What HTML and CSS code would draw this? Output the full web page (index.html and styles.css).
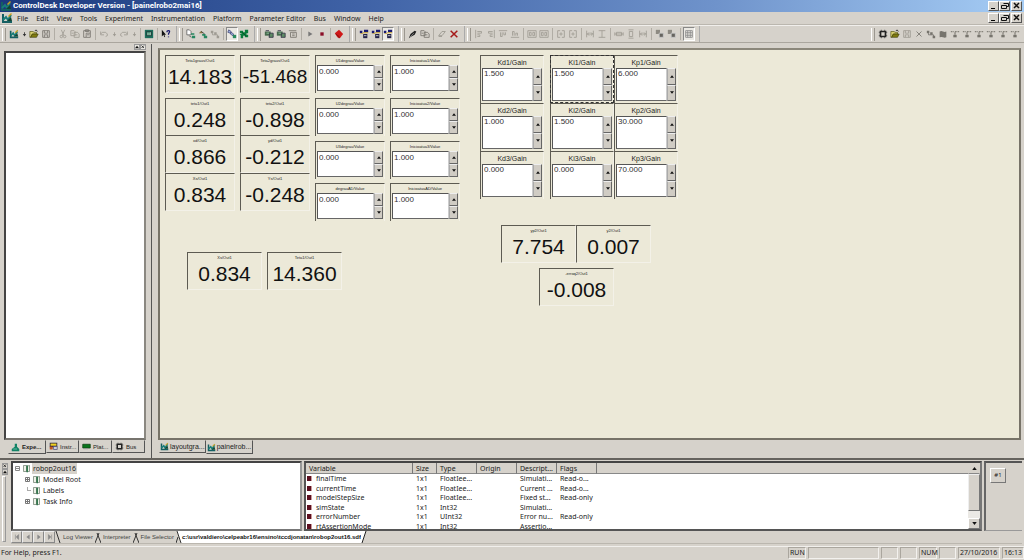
FILE: index.html
```html
<!DOCTYPE html>
<html lang="en">
<head>
<meta charset="utf-8">
<title>ControlDesk Developer Version - [painelrobo2mai16]</title>
<link rel="stylesheet" href="styles.css">
</head>
<body>
<svg class="defs" aria-hidden="true">
  <symbol id="desk" viewBox="0 0 12 12"><path d="M1 2h2v7h8v2H1z" fill="#155f62"/><path d="M2 8l3-3 2 3 3-5" fill="none" stroke="#197d78" stroke-width="2"/><path d="M7 4l3-3 1 1-3 3z" fill="#c8a020"/><path d="M6 9l4-4 1 4z" fill="#143"/></symbol>
  <symbol id="down" viewBox="0 0 6 12"><path d="M1 6h4L3 9zM2.500 4h1v2h-1z" fill="currentColor"/></symbol>
  <symbol id="open" viewBox="0 0 12 12"><path d="M1 3h4l1 1h3v2H4l-2 4H1z" fill="#d8d070" stroke="#444400" stroke-width=".7"/><path d="M4 6h7l-2 4H2z" fill="#807c10" stroke="#333300" stroke-width=".7"/><path d="M7 2q2-2 3 1" fill="none" stroke="#222"/></symbol>
  <symbol id="save" viewBox="0 0 12 12"><path d="M2 2h8v8H2zM4 2v3h4V2M4 10V7h4v3" fill="none" stroke="currentColor"/></symbol>
  <symbol id="cut" viewBox="0 0 12 12"><path d="M4 1l3 7M8 1L5 8" stroke="currentColor" fill="none"/><circle cx="4" cy="9" r="1.500" fill="none" stroke="currentColor"/><circle cx="8" cy="9" r="1.500" fill="none" stroke="currentColor"/></symbol>
  <symbol id="copy" viewBox="0 0 12 12"><path d="M1 2h4l1 1v5H1zM5 4h4l2 2v4H5zM6 7h3M2 5h2" fill="none" stroke="currentColor"/></symbol>
  <symbol id="paste" viewBox="0 0 12 12"><path d="M2 2h8v3M2 2v8h3M4 1h4v2H4zM5 5h5v5H5zM6 7h3" fill="none" stroke="currentColor"/></symbol>
  <symbol id="undo" viewBox="0 0 12 12"><path d="M2 3v4h4M2 6l2-2h4l2 2v2l-2 1" fill="none" stroke="currentColor"/></symbol>
  <symbol id="redo" viewBox="0 0 12 12"><path d="M10 3v4H6M10 6L8 4H4L2 6v2l2 1" fill="none" stroke="currentColor"/></symbol>
  <symbol id="monitor" viewBox="0 0 12 12"><path d="M1 1h10v10H1z" fill="#1c6d5b"/><path d="M3 3h6v5H3z" fill="#bcd6bc" stroke="#133"/><path d="M3 4h5M3 6h5" stroke="#176a57"/></symbol>
  <symbol id="help" viewBox="0 0 12 12"><path d="M1 1v8l2-2 1 3 1-1-1-2h2z" fill="#111"/><path d="M7 4q0-2 2-2t1 2L9 6v1M9 9v1" fill="none" stroke="#15156a" stroke-width="1.500"/></symbol>
  <symbol id="pages" viewBox="0 0 12 12"><path d="M1 1h3l2 2v4H1z" fill="#fff" stroke="#444" stroke-width=".8"/><path d="M6 5h4v2H6zM7 8h4v3H7z" fill="#278660"/><path d="M4 8l2 2" stroke="#333"/></symbol>
  <symbol id="plug" viewBox="0 0 12 12"><path d="M1 5l3-3 2 3H3z" fill="#8a7440"/><path d="M4 3l4 3" stroke="#333"/><path d="M5 6h4v2H5zM7 8h4v3H7z" fill="#278660"/></symbol>
  <symbol id="nodes" viewBox="0 0 12 12"><path d="M1 2h3v3H1zM5 4h3v3H5zM8 8h3v3H8z" fill="currentColor"/><path d="M3 5v2h6v2" stroke="currentColor" fill="none"/></symbol>
  <symbol id="chain" viewBox="0 0 12 12"><path d="M2 1l3 2-1 2-3-1zM5 4l3 2-1 2-3-2z" fill="#9ab0dd" stroke="#336" stroke-width=".8"/><path d="M7 7h4v4H7z" fill="#2a8a60"/></symbol>
  <symbol id="clover" viewBox="0 0 12 12"><path d="M1 2h4v2h2V1h4v4H9v2h2v3H7V8H5v3H2V7H1V6h2V5H1z" fill="#087b3c"/><path d="M4 4l5 5" stroke="#044d22"/></symbol>
  <symbol id="rack" viewBox="0 0 12 12"><path d="M1 3h7v5H1z" fill="#476b4f"/><path d="M2 2h4M7 5h4v5H6z" fill="#5d8b65" stroke="#334"/><path d="M3 5h3" stroke="#9ca"/></symbol>
  <symbol id="list" viewBox="0 0 12 12"><path d="M1 2h9M3 4h7v6H3zM5 6h3M5 8h3" fill="none" stroke="#77746c"/></symbol>
  <symbol id="play" viewBox="0 0 12 12"><path d="M4 3l5 3-5 3z" fill="#777"/></symbol>
  <symbol id="stop" viewBox="0 0 12 12"><path d="M4 4h4v4H4z" fill="#8b0d27"/></symbol>
  <symbol id="gem" viewBox="0 0 12 12"><path d="M1 5l5-4 5 5-4 5-3-1z" fill="#cf1818"/><path d="M2 6l4 3v2" stroke="#7c0b0b" fill="none"/></symbol>
  <symbol id="inst" viewBox="0 0 12 12"><path d="M1 2h3v3H1zM6 1h5v3H6z" fill="#181a70"/><path d="M2 5h3v1H2zM5 4h6v1H5z" fill="#c9a430"/><path d="M5 6h5v5H5z" fill="#242449"/><path d="M6 8h3" stroke="#ddd"/></symbol>
  <symbol id="pen" viewBox="0 0 12 12"><path d="M1 11l2-5 5-4 2 1-2 4-4 2z" fill="#222"/><path d="M2 10l5-5" stroke="#888"/></symbol>
  <symbol id="erase" viewBox="0 0 12 12"><path d="M2 8l4-5h4L6 8zM2 9h4" fill="none" stroke="#9a978f"/></symbol>
  <symbol id="cross" viewBox="0 0 12 12"><path d="M2 2l8 8M10 2l-8 8" stroke="#a51a1a" stroke-width="1.800"/></symbol>
  <symbol id="xgray" viewBox="0 0 12 12"><path d="M3 3l6 6M9 3L3 9" stroke="currentColor"/></symbol>
  <symbol id="al" viewBox="0 0 12 12"><path d="M2 1v10M4 3h5v2H4M4 7h3v2H4" fill="none" stroke="currentColor"/></symbol>
  <symbol id="ar" viewBox="0 0 12 12"><path d="M10 1v10M8 3H3v2h5M8 7H5v2h3" fill="none" stroke="currentColor"/></symbol>
  <symbol id="at" viewBox="0 0 12 12"><path d="M1 2h10M3 4v5h2V4M7 4v3h2V4" fill="none" stroke="currentColor"/></symbol>
  <symbol id="ab" viewBox="0 0 12 12"><path d="M1 10h10M3 8V3h2v5M7 8V5h2v3" fill="none" stroke="currentColor"/></symbol>
  <symbol id="box" viewBox="0 0 12 12"><path d="M1 2h10v8H1zM3 4h2v4H3zM7 4h2v4H7z" fill="none" stroke="currentColor"/></symbol>
  <symbol id="split" viewBox="0 0 12 12"><path d="M5 2H2v8h3M7 2h3v8H7M4 6h4M6 4v4" fill="none" stroke="currentColor"/></symbol>
  <symbol id="hsp" viewBox="0 0 12 12"><path d="M2 2v8M10 2v8M2 6h8M5 4L3 6l2 2M7 4l2 2-2 2" fill="none" stroke="currentColor"/></symbol>
  <symbol id="vsp" viewBox="0 0 12 12"><path d="M2 2h8M2 10h8M6 2v8" fill="none" stroke="currentColor"/></symbol>
  <symbol id="wide" viewBox="0 0 12 12"><path d="M1 4v4M11 4v4M3 4h6v4H3zM1 6h10" fill="none" stroke="currentColor"/></symbol>
  <symbol id="tall" viewBox="0 0 12 12"><path d="M3 1h6M3 11h6M4 3h4v6H4z" fill="none" stroke="currentColor"/></symbol>
  <symbol id="layer" viewBox="0 0 12 12"><path d="M1 1h5v5H1z" fill="#8d8a82"/><path d="M5 5h5v5H5z" fill="#66645f" stroke="#ccc"/></symbol>
  <symbol id="grid" viewBox="0 0 12 12"><path d="M2 2h8v8H2zM2 4.500h8M2 7.500h8M4.500 2v8M7.500 2v8" fill="none" stroke="#888"/></symbol>
  <symbol id="bus" viewBox="0 0 12 12"><path d="M3 3h6v6H3z" fill="none" stroke="#222" stroke-width="2"/><path d="M1 4h1M1 8h1M10 4h1M10 8h1M4 1v1M8 1v1M4 10v1M8 10v1" stroke="#222"/></symbol>
  <symbol id="flag" viewBox="0 0 12 12"><path d="M2 3q2-1 4 0t4 0v7q-2 1-4 0t-4 0z" fill="#77746d"/></symbol>
  <symbol id="com" viewBox="0 0 12 12"><path d="M1 3h2M4 3h1M6 3h2M9 3h2M6 4v3" stroke="#85827a" stroke-width="1.500"/><path d="M4 7h4v3H4z" fill="#77746d"/></symbol>
  <symbol id="flask" viewBox="0 0 12 12"><path d="M5 1h3v4l3 3v3H1V8l4-3z" fill="#128266"/><path d="M3 8h5" stroke="#7fd0b8"/></symbol>
  <symbol id="chip" viewBox="0 0 12 12"><path d="M1 3h10v5H1z" fill="#08751b" stroke="#0b3d11"/><path d="M2 9h6" stroke="#999"/></symbol>
  <symbol id="gauge" viewBox="0 0 12 12"><path d="M1 1h10v6H1z" fill="#201c42"/><path d="M1 6h4v4H1z" fill="#b52"/><path d="M2 2h8v3H2z" fill="#f0d020"/><path d="M6 6h5v4H6z" fill="#ccd" stroke="#557"/></symbol>
  <symbol id="book" viewBox="0 0 12 12"><path d="M2 2h4v8H2zM6 3l4-1v8H6z" fill="#eef2e8" stroke="#536353" stroke-width=".8"/><path d="M6 2h2v9H6z" fill="#337a50"/></symbol>
  <symbol id="up3" viewBox="0 0 6 4"><path d="M3 0l3 4H0z" fill="#111"/></symbol>
  <symbol id="dn3" viewBox="0 0 6 4"><path d="M3 4l3-4H0z" fill="#111"/></symbol>
  <symbol id="wmin" viewBox="0 0 8 8"><path d="M1 6h4v1H1z"/></symbol>
  <symbol id="wres" viewBox="0 0 8 8"><path d="M2.500 1.500h5v3h-2M.500 3.500h5v3h-5z" fill="none" stroke="#111"/></symbol>
  <symbol id="wx" viewBox="0 0 8 8"><path d="M1 1l5 5M6 1L1 6" stroke="#111" stroke-width="1.500"/></symbol>
</svg>
<div class="app">
  <header class="titlebar">
    <svg class="ico"><use href="#desk"/></svg>
    <h1>ControlDesk Developer Version - [painelrobo2mai16]</h1>
    <div class="winbtns"><button aria-label="Minimize"><svg><use href="#wmin"/></svg></button><button aria-label="Restore"><svg><use href="#wres"/></svg></button><button class="close" aria-label="Close"><svg><use href="#wx"/></svg></button></div>
  </header>
  <nav class="menubar">
    <svg class="ico"><use href="#desk"/></svg>
    <button>File</button><button>Edit</button><button>View</button><button>Tools</button><button>Experiment</button><button>Instrumentation</button><button>Platform</button><button>Parameter Editor</button><button>Bus</button><button>Window</button><button>Help</button>
    <div class="winbtns"><button aria-label="Minimize document"><svg><use href="#wmin"/></svg></button><button aria-label="Restore document"><svg><use href="#wres"/></svg></button><button class="close" aria-label="Close document"><svg><use href="#wx"/></svg></button></div>
  </nav>
  <div class="toolbar">
    <div class="group"><button aria-label="Layout"><svg><use href="#desk"/></svg></button><button class="dd" aria-label="New"><svg><use href="#down"/></svg></button><button aria-label="Open"><svg><use href="#open"/></svg></button><button class="mid" aria-label="Save"><svg><use href="#save"/></svg></button><i></i><button class="off" aria-label="Cut"><svg><use href="#cut"/></svg></button><button class="off" aria-label="Copy"><svg><use href="#copy"/></svg></button><button class="mid" aria-label="Paste"><svg><use href="#paste"/></svg></button><i></i><button class="off" aria-label="Undo"><svg><use href="#undo"/></svg></button><button class="dd off" aria-label="Undo list"><svg><use href="#down"/></svg></button><button class="off" aria-label="Redo"><svg><use href="#redo"/></svg></button><button class="dd off" aria-label="Redo list"><svg><use href="#down"/></svg></button><i></i><button aria-label="Monitor"><svg><use href="#monitor"/></svg></button><i></i><button aria-label="Context help"><svg><use href="#help"/></svg></button></div>
    <div class="group"><button aria-label="New experiment"><svg><use href="#pages"/></svg></button><button aria-label="Connect"><svg><use href="#plug"/></svg></button><button class="off" aria-label="Tree"><svg><use href="#nodes"/></svg></button><i></i><button class="on" aria-label="Edit mode"><svg><use href="#chain"/></svg></button><button aria-label="Animation mode"><svg><use href="#clover"/></svg></button></div>
    <div class="group"><button aria-label="Platform"><svg><use href="#rack"/></svg></button><button aria-label="Load"><svg><use href="#rack"/></svg></button><button aria-label="Properties"><svg><use href="#list"/></svg></button><i></i><button aria-label="Start"><svg><use href="#play"/></svg></button><button aria-label="Stop"><svg><use href="#stop"/></svg></button><i></i><button aria-label="Stop all"><svg><use href="#gem"/></svg></button></div>
    <div class="group"><button aria-label="Instruments"><svg><use href="#inst"/></svg></button><button aria-label="Data acquisition"><svg><use href="#inst"/></svg></button><button class="on" aria-label="Capture"><svg><use href="#inst"/></svg></button></div>
    <div class="group"><button aria-label="Draw"><svg><use href="#pen"/></svg></button><button class="mid" aria-label="Duplicate"><svg><use href="#copy"/></svg></button><i></i><button aria-label="Erase"><svg><use href="#erase"/></svg></button><button aria-label="Delete"><svg><use href="#cross"/></svg></button></div>
    <div class="group off"><button aria-label="Align left"><svg><use href="#al"/></svg></button><button aria-label="Align right"><svg><use href="#ar"/></svg></button><button aria-label="Align top"><svg><use href="#at"/></svg></button><button aria-label="Align bottom"><svg><use href="#ab"/></svg></button><i></i><button aria-label="Group"><svg><use href="#box"/></svg></button><button aria-label="Ungroup"><svg><use href="#box"/></svg></button><i></i><button aria-label="Center horizontally"><svg><use href="#split"/></svg></button><button aria-label="Center vertically"><svg><use href="#split"/></svg></button><i></i><button aria-label="Space across"><svg><use href="#hsp"/></svg></button><button aria-label="Space down"><svg><use href="#vsp"/></svg></button><i></i><button aria-label="Same width"><svg><use href="#wide"/></svg></button><button aria-label="Same height"><svg><use href="#tall"/></svg></button><button aria-label="Same size"><svg><use href="#hsp"/></svg></button><i></i><button aria-label="To front"><svg><use href="#layer"/></svg></button><button aria-label="To back"><svg><use href="#layer"/></svg></button><i></i><button class="on" aria-label="Grid"><svg><use href="#grid"/></svg></button></div>
    <div class="group right"><button aria-label="Bus"><svg><use href="#bus"/></svg></button><button aria-label="Open bus"><svg><use href="#open"/></svg></button><button class="off" aria-label="Save bus"><svg><use href="#save"/></svg></button><button class="mid" aria-label="Remove"><svg><use href="#xgray"/></svg></button><button class="mid" aria-label="Network"><svg><use href="#nodes"/></svg></button><button aria-label="Flag"><svg><use href="#flag"/></svg></button><button aria-label="COM 1"><svg><use href="#com"/></svg></button><button aria-label="COM 2"><svg><use href="#com"/></svg></button><button aria-label="COM 3"><svg><use href="#com"/></svg></button><button aria-label="COM 4"><svg><use href="#com"/></svg></button><button aria-label="COM 5"><svg><use href="#com"/></svg></button><button aria-label="COM 6"><svg><use href="#com"/></svg></button></div>
  </div>

  <main class="main">
    <aside class="side">
      <div class="sidehead"><button aria-label="Expand"><svg><use href="#up3"/></svg></button><button aria-label="Close panel"><svg><use href="#wx"/></svg></button></div>
      <div class="navigator"></div>
      <div class="tabs"><button class="active"><svg><use href="#flask"/></svg>Expe...</button><button><svg><use href="#gauge"/></svg>Instr...</button><button><svg><use href="#chip"/></svg>Plat...</button><button><svg><use href="#bus"/></svg>Bus</button></div>
    </aside>
    <section class="work">
      <div class="canvas">
        <div class="disp c1 r1"><span>Teta1graus/Out1</span><output>14.183</output></div>
        <div class="disp c2 r1 long"><span>Teta2graus/Out1</span><output>-51.468</output></div>
        <div class="disp c1 r2"><span>teta1/Out1</span><output>0.248</output></div>
        <div class="disp c2 r2"><span>teta2/Out1</span><output>-0.898</output></div>
        <div class="disp c1 r3"><span>xd/Out1</span><output>0.866</output></div>
        <div class="disp c2 r3"><span>yd/Out1</span><output>-0.212</output></div>
        <div class="disp c1 r4"><span>Xs/Out1</span><output>0.834</output></div>
        <div class="disp c2 r4"><span>Ys/Out1</span><output>-0.248</output></div>
        <div class="disp big p1"><span>Xs/Out1</span><output>0.834</output></div>
        <div class="disp big p2"><span>Teta1/Out1</span><output>14.360</output></div>
        <div class="disp big p3"><span>yp2/Out1</span><output>7.754</output></div>
        <div class="disp big p4"><span>y2/Out1</span><output>0.007</output></div>
        <div class="disp big p5"><span>-erroq2/Out1</span><output>-0.008</output></div>

        <div class="num c3 r1"><label for="u1">U1degrau/Value</label><input id="u1" value="0.000"><div class="spin"><button aria-label="Up"><svg><use href="#up3"/></svg></button><button aria-label="Down"><svg><use href="#dn3"/></svg></button></div></div>
        <div class="num c4 r1"><label for="i1">Inicioatua1/Value</label><input id="i1" value="1.000"><div class="spin"><button aria-label="Up"><svg><use href="#up3"/></svg></button><button aria-label="Down"><svg><use href="#dn3"/></svg></button></div></div>
        <div class="num c3 r2"><label for="u2">U2degrau/Value</label><input id="u2" value="0.000"><div class="spin"><button aria-label="Up"><svg><use href="#up3"/></svg></button><button aria-label="Down"><svg><use href="#dn3"/></svg></button></div></div>
        <div class="num c4 r2"><label for="i2">Inicioatua2/Value</label><input id="i2" value="1.000"><div class="spin"><button aria-label="Up"><svg><use href="#up3"/></svg></button><button aria-label="Down"><svg><use href="#dn3"/></svg></button></div></div>
        <div class="num c3 n3"><label for="u3">U3degrau/Value</label><input id="u3" value="0.000"><div class="spin"><button aria-label="Up"><svg><use href="#up3"/></svg></button><button aria-label="Down"><svg><use href="#dn3"/></svg></button></div></div>
        <div class="num c4 n3"><label for="i3">Inicioatua3/Value</label><input id="i3" value="1.000"><div class="spin"><button aria-label="Up"><svg><use href="#up3"/></svg></button><button aria-label="Down"><svg><use href="#dn3"/></svg></button></div></div>
        <div class="num c3 n4"><label for="u4">degrauAD/Value</label><input id="u4" value="0.000"><div class="spin"><button aria-label="Up"><svg><use href="#up3"/></svg></button><button aria-label="Down"><svg><use href="#dn3"/></svg></button></div></div>
        <div class="num c4 n4"><label for="i4">InicioatuaAD/Value</label><input id="i4" value="1.000"><div class="spin"><button aria-label="Up"><svg><use href="#up3"/></svg></button><button aria-label="Down"><svg><use href="#dn3"/></svg></button></div></div>

        <div class="num gain g1 h1"><label for="kd1">Kd1/Gain</label><input id="kd1" value="1.500"><div class="spin"><button aria-label="Up"><svg><use href="#up3"/></svg></button><button aria-label="Down"><svg><use href="#dn3"/></svg></button></div></div>
        <div class="num gain g2 h1 selected"><label for="ki1">Ki1/Gain</label><input id="ki1" value="1.500"><div class="spin"><button aria-label="Up"><svg><use href="#up3"/></svg></button><button aria-label="Down"><svg><use href="#dn3"/></svg></button></div></div>
        <div class="num gain g3 h1"><label for="kp1">Kp1/Gain</label><input id="kp1" value="6.000"><div class="spin"><button aria-label="Up"><svg><use href="#up3"/></svg></button><button aria-label="Down"><svg><use href="#dn3"/></svg></button></div></div>
        <div class="num gain g1 h2"><label for="kd2">Kd2/Gain</label><input id="kd2" value="1.000"><div class="spin"><button aria-label="Up"><svg><use href="#up3"/></svg></button><button aria-label="Down"><svg><use href="#dn3"/></svg></button></div></div>
        <div class="num gain g2 h2"><label for="ki2">Ki2/Gain</label><input id="ki2" value="1.500"><div class="spin"><button aria-label="Up"><svg><use href="#up3"/></svg></button><button aria-label="Down"><svg><use href="#dn3"/></svg></button></div></div>
        <div class="num gain g3 h2"><label for="kp2">Kp2/Gain</label><input id="kp2" value="30.000"><div class="spin"><button aria-label="Up"><svg><use href="#up3"/></svg></button><button aria-label="Down"><svg><use href="#dn3"/></svg></button></div></div>
        <div class="num gain g1 h3"><label for="kd3">Kd3/Gain</label><input id="kd3" value="0.000"><div class="spin"><button aria-label="Up"><svg><use href="#up3"/></svg></button><button aria-label="Down"><svg><use href="#dn3"/></svg></button></div></div>
        <div class="num gain g2 h3"><label for="ki3">Ki3/Gain</label><input id="ki3" value="0.000"><div class="spin"><button aria-label="Up"><svg><use href="#up3"/></svg></button><button aria-label="Down"><svg><use href="#dn3"/></svg></button></div></div>
        <div class="num gain g3 h3"><label for="kp3">Kp3/Gain</label><input id="kp3" value="70.000"><div class="spin"><button aria-label="Up"><svg><use href="#up3"/></svg></button><button aria-label="Down"><svg><use href="#dn3"/></svg></button></div></div>
      </div>
      <div class="tabs sheets"><button><svg><use href="#desk"/></svg>layoutgra...</button><button class="active"><svg><use href="#desk"/></svg>painelrob...</button></div>
    </section>
  </main>

  <section class="tools">
    <div class="handle"><button aria-label="Close tool window"><svg><use href="#wx"/></svg></button><button aria-label="Collapse tool window"><svg><use href="#up3"/></svg></button><div class="rail"></div></div>
    <div class="toolbody">
      <div class="panes">
        <ul class="tree">
          <li><svg class="pm" viewBox="0 0 7 7"><path d="M1.500 1.500h4v4h-4zM2 3.500h3" fill="none" stroke="#888"/></svg><svg class="ico"><use href="#book"/></svg><span class="sel">robop2out16</span>
            <ul>
              <li><svg class="pm" viewBox="0 0 7 7"><path d="M1.500 1.500h4v4h-4zM2 3.500h3M3.500 2v3" fill="none" stroke="#777"/></svg><svg class="ico"><use href="#book"/></svg><span>Model Root</span></li>
              <li><svg class="pm" viewBox="0 0 7 7"><path d="M3.500 0v4M4 3.500h3" fill="none" stroke="#aaa"/></svg><svg class="ico"><use href="#book"/></svg><span>Labels</span></li>
              <li><svg class="pm" viewBox="0 0 7 7"><path d="M1.500 1.500h4v4h-4zM2 3.500h3M3.500 2v3" fill="none" stroke="#777"/></svg><svg class="ico"><use href="#book"/></svg><span>Task Info</span></li>
            </ul>
          </li>
        </ul>
        <div class="vars">
          <div class="tablebox">
            <table>
              <colgroup><col class="w1"><col class="w2"><col class="w3"><col class="w3"><col class="w3"><col class="w3"><col></colgroup>
              <thead><tr><th>Variable</th><th>Size</th><th>Type</th><th>Origin</th><th>Descript...</th><th>Flags</th><th></th></tr></thead>
              <tbody>
                <tr><td><b></b>finalTime</td><td>1x1</td><td>FloatIee...</td><td></td><td>Simulati...</td><td>Read-o...</td><td></td></tr>
                <tr><td><b></b>currentTime</td><td>1x1</td><td>FloatIee...</td><td></td><td>Current ...</td><td>Read-o...</td><td></td></tr>
                <tr><td><b></b>modelStepSize</td><td>1x1</td><td>FloatIee...</td><td></td><td>Fixed st...</td><td>Read-only</td><td></td></tr>
                <tr><td><b></b>simState</td><td>1x1</td><td>Int32</td><td></td><td>Simulati...</td><td></td><td></td></tr>
                <tr><td><b></b>errorNumber</td><td>1x1</td><td>UInt32</td><td></td><td>Error nu...</td><td>Read-only</td><td></td></tr>
                <tr><td><b></b>rtAssertionMode</td><td>1x1</td><td>Int32</td><td></td><td>Assertio...</td><td></td><td></td></tr>
              </tbody>
            </table>
          </div>
          <div class="scroll"><button class="flat" aria-label="Scroll up"><svg><use href="#up3"/></svg></button><div class="thumb"></div><div class="track"></div><button aria-label="Scroll down"><svg><use href="#dn3"/></svg></button></div>
        </div>
        <div class="extra"><button>#1</button></div>
      </div>
      <div class="filetabs">
        <button class="nav" aria-label="First"><svg viewBox="0 0 10 10"><path d="M3 2v6M7 2L4 5l3 3z" fill="#888" stroke="#888" stroke-width=".8"/></svg></button><button class="nav" aria-label="Previous"><svg viewBox="0 0 10 10"><path d="M7 2L3 5l4 3z" fill="#888"/></svg></button><button class="nav" aria-label="Next"><svg viewBox="0 0 10 10"><path d="M3 2l4 3-4 3z" fill="#888"/></svg></button><button class="nav" aria-label="Last"><svg viewBox="0 0 10 10"><path d="M7 2v6M3 2l3 3-3 3z" fill="#888" stroke="#888" stroke-width=".8"/></svg></button>
        <svg class="slash" viewBox="0 0 6 12"><path d="M1 0l4 12" stroke="#333"/></svg><button>Log Viewer</button>
        <svg class="slash" viewBox="0 0 6 12"><path d="M0 12L4 2M2 2l4 10" stroke="#333"/></svg><button>Interpreter</button>
        <svg class="slash" viewBox="0 0 6 12"><path d="M0 12L4 2M2 2l4 10" stroke="#333"/></svg><button>File Selector</button>
        <svg class="slash" viewBox="0 0 6 12"><path d="M1 0h5v12H5z" fill="#fff"/><path d="M0 12l2-6M1 0l4 12" stroke="#333"/></svg><button class="active">c:\usr\valdiero\celpeabr16\ensino\tccdjonatan\robop2out16.sdf</button><svg class="slash" viewBox="0 0 6 12"><path d="M0 0h5L1 12H0z" fill="#fff"/><path d="M5 0L1 12" stroke="#222"/></svg>
      </div>
    </div>
  </section>
  <footer class="status"><span class="msg">For Help, press F1.</span><span class="cell s1">RUN</span><span class="cell s2"></span><span class="cell s3"></span><span class="cell s3"></span><span class="cell s4">NUM</span><span class="cell s3"></span><span class="cell s5">27/10/2016</span><span class="cell s6">16:13</span></footer>
</div>
</body>
</html>
```

FILE: styles.css
```css
* { box-sizing: border-box; }
html, body { margin: 0; height: 100%; }
body { font: 7px/9px "Noto Sans", "DejaVu Sans", sans-serif; color: #222; background: #d6d2cb; overflow: hidden; }
button { font: inherit; color: inherit; margin: 0; padding: 0; border: 0; background: none; display: flex; align-items: center; justify-content: center; }
svg { display: block; flex: none; }
.defs { width: 0; height: 0; position: absolute; }
.app { height: 100vh; display: flex; flex-direction: column; }
.ico { width: 12px; height: 12px; }

.titlebar { display: flex; align-items: center; gap: 1px; height: 12px; background: linear-gradient(90deg, #1c3a7e, #3f62a6 35%, #6f93cb 70%, #a6cdf5); color: #fff; }
.titlebar h1 { margin: 0; font: 700 8px/12px Roboto, "Noto Sans", sans-serif; white-space: nowrap; }
.winbtns { margin-left: auto; display: flex; padding-right: 2px; }
.winbtns button { width: 11px; height: 10px; background: #d6d2cb; border: 1px solid; border-color: #fff #555 #555 #fff; color: #111; }
.winbtns .close { margin-left: 1px; }
.winbtns svg { width: 8px; height: 8px; }
.menubar { display: flex; align-items: center; height: 13px; padding-left: 1px; border-bottom: 1px solid #bbb7af; }
.menubar > button { padding: 0 4px; }

.toolbar { display: flex; height: 18px; align-items: stretch; border-bottom: 1px solid #aaa69e; border-top: 1px solid #f1efec; }
.group { display: flex; align-items: center; padding: 0 4px 0 2px; border-right: 1px solid #aaa; }
.group::before { content: ""; width: 2px; height: 13px; margin-right: 2px; border-left: 1px solid #fff; border-right: 1px solid #9b978f; }
.group button { width: 12px; height: 14px; color: #333; }
.group svg { width: 10px; height: 10px; }
.group .dd { width: 8px; }
.group .dd svg { width: 5px; }
.group .on { background: #ebe9e4; border: 1px solid; border-color: #888 #fff #fff #888; }
.group .off, .off button { color: #9f9b93; }
.group .mid { color: #77746d; }
.group i { width: 1px; height: 12px; margin: 0 2px; background: #b1ada5; }
.group.right { margin-left: auto; border-right: 0; padding-right: 3px; }

.main { flex: 1; min-height: 0; display: flex; }
.side { width: 152px; flex: none; display: flex; flex-direction: column; border-right: 1px solid #555; margin-top: 1px; padding: 0 5px 0 4px; }
.sidehead { display: flex; justify-content: flex-end; height: 7px; }
.sidehead button { width: 6px; height: 6px; border: 1px solid #999; background: #e8e6e0; }
.sidehead svg { width: 4px; height: 4px; }
.navigator { flex: 1; background: #fff; border: 2px solid; border-color: #444 #8b8881 #77746e #444; }
.tabs { display: flex; height: 18px; align-items: flex-start; padding-left: 4px; font: 6px/10px "Liberation Sans", Arial, sans-serif; }
.tabs button { height: 13px; padding: 0 2px; gap: 2px; border: 1px solid; border-color: transparent #555 #555 transparent; width: 33px; justify-content: flex-start; }
.tabs svg { width: 9px; height: 9px; }
.tabs .active { font-weight: 700; width: 38px; height: 14px; }
.sheets { font-size: 7px; padding-left: 1px; }
.sheets button, .sheets .active { width: auto; font-weight: 400; gap: 1px; padding: 0; }
.sheets .active { padding-right: 1px; }
.work { flex: 1; min-width: 0; display: flex; flex-direction: column; padding: 5px 3px 0 6px; }
.canvas { flex: 1; position: relative; background: #ece9d8; border: 2px solid; border-color: #8b877a #777368 #777368 #777368; }

.disp, .num { position: absolute; width: 70px; height: 38px; border-top: 1px solid #5d5b52; border-left: 1px solid #5d5b52; border-right: 1px solid #f3f1e8; font-family: "Liberation Sans", Arial, sans-serif; }
.disp { display: flex; flex-direction: column; align-items: center; border-bottom: 1px solid #f3f1e8; }
.disp span, .num label { font-size: 4px; line-height: 5px; padding-top: 2px; text-align: center; white-space: nowrap; }
.disp output { font-size: 21px; line-height: 28px; color: #111; white-space: nowrap; }
.disp.long output { font-size: 19px; }
.disp.big { width: 75px; }
.num { display: grid; grid-template: 9px 1fr / 1fr 9px; padding: 0 1px 2px 1px; }
.num label { grid-column: 1 / 3; }
.num input { min-width: 0; width: 100%; height: 100%; border: 1px solid; border-color: #555 #ccc #666 #555; background: #fff; font: 8px/9px "Liberation Sans", Arial, sans-serif; color: #333; padding: 0 0 14px 1px; outline: 0; }
.spin { display: grid; grid-template-rows: 1fr 1fr; }
.spin button { border: 1px solid; border-color: #eee #666 #666 #aaa; background: #d0ccc4; }
.spin svg { width: 4px; height: 3px; }
.gain { width: 64px; height: 48px; grid-template-rows: 12px 1fr; }
.gain label { font-size: 7px; line-height: 9px; }
.gain input { padding-bottom: 22px; }
.selected { outline: 1px dashed #333; outline-offset: -1px; }
.c1 { left: 5px; } .c2 { left: 80px; } .c3 { left: 155px; } .c4 { left: 230px; }
.r1 { top: 5px; } .r2 { top: 48px; } .r3 { top: 85px; } .r4 { top: 123px; }
.n3 { top: 91px; } .n4 { top: 133px; }
.g1 { left: 320px; } .g2 { left: 390px; } .g3 { left: 454px; }
.h1 { top: 5px; } .h2 { top: 53px; } .h3 { top: 101px; }
.p1 { left: 27px; top: 202px; } .p2 { left: 107px; top: 202px; }
.p3 { left: 341px; top: 175px; } .p4 { left: 416px; top: 175px; } .p5 { left: 379px; top: 218px; }

.tools { display: flex; border-top: 2px solid #66635e; padding: 1px 2px 2px 2px; }
.handle { width: 9px; padding-top: 2px; }
.handle button { width: 6px; height: 6px; border: 1px solid #999; }
.handle svg { width: 4px; height: 4px; }
.rail { width: 4px; height: 66px; margin-top: 1px; border: 1px solid; border-color: #fff #999 #999 #fff; }
.toolbody { flex: 1; min-width: 0; }
.panes { display: flex; height: 70px; gap: 2px; }
.tree { width: 291px; }
.tree, .tree ul { list-style: none; margin: 0; padding: 0; }
.tree { background: #fff; border: 2px solid; border-color: #444 #999 #777 #444; line-height: 11px; }
.tree li { padding-left: 1px; }
.tree li ul { padding-left: 9px; }
.tree svg, .tree span { display: inline-block; vertical-align: top; }
.tree .pm { width: 7px; height: 7px; margin: 2px 1px 0 0; }
.tree .ico { width: 9px; height: 9px; margin: 1px 1px 0 0; }
.tree span { height: 11px; padding: 0 1px; }
.tree .sel { background: #d6d2cb; }
.vars { flex: 1; min-width: 0; display: flex; background: #fff; border: 2px solid; border-color: #444 #777 #555 #555; }
.tablebox { flex: 1; min-width: 0; overflow: hidden; }
table { width: 100%; height: 68px; table-layout: fixed; border-collapse: separate; border-spacing: 0; line-height: 9px; }
th { height: 11px; text-align: left; font-weight: 400; padding: 0 3px; background: #d6d2cb; border-right: 1px solid #777; border-bottom: 1px solid #888; }
th:last-child { border-right: 0; }
td { padding: 0 3px; white-space: nowrap; }
td b { display: inline-block; width: 5px; height: 5px; margin: 0 4px 1px 0; vertical-align: middle; background: #5b1020; border-right: 1px solid #c99; }
td:first-child { padding-left: 1px; }
.w1 { width: 107px; } .w2 { width: 24px; } .w3 { width: 40px; }
.scroll { width: 12px; display: flex; flex-direction: column; background: #ebe9e5; }
.scroll button { height: 11px; background: #d6d2cb; border: 1px solid; border-color: #fff #777 #777 #fff; }
.scroll .flat { border-color: #d6d2cb; border-bottom-color: #888; }
.scroll svg { width: 5px; height: 3px; }
.thumb { flex: 5; background: #d6d2cb; border: 1px solid; border-color: #eee #777 #777 #eee; }
.track { flex: 1; }
.extra { width: 38px; border-top: 2px solid #555; border-left: 2px solid #666; border-bottom: 1px solid #999; padding: 5px 4px; }
.extra button { width: 16px; height: 15px; border: 1px solid; border-color: #fff #777 #777 #fff; font-size: 6px; }
.filetabs { display: flex; height: 13px; font: 6px/12px "Liberation Sans", Arial, sans-serif; color: #444; border-bottom: 1px solid #bbb7af; }
.filetabs .nav { width: 11px; height: 12px; border: 1px solid; border-color: #eee #888 #888 #eee; }
.nav svg { width: 8px; height: 8px; }
.filetabs .slash { width: 6px; height: 12px; }
.filetabs button { height: 12px; padding: 0 2px; white-space: nowrap; }
.filetabs .active { background: #fff; font-weight: 700; color: #111; padding: 0; }

.status { display: flex; align-items: flex-start; gap: 2px; height: 14px; border-top: 1px solid #f1efec; padding-left: 1px; }
.msg { flex: 1; line-height: 11px; }
.cell { height: 12px; line-height: 9px; padding: 0 1px; border: 1px solid; border-color: #aaa69e #f3f1ee #f3f1ee #aaa69e; white-space: nowrap; }
.s1 { width: 18px; } .s2 { width: 71px; } .s3 { width: 17px; } .s4 { width: 18px; } .s5 { width: 42px; } .s6 { width: 22px; }
```
